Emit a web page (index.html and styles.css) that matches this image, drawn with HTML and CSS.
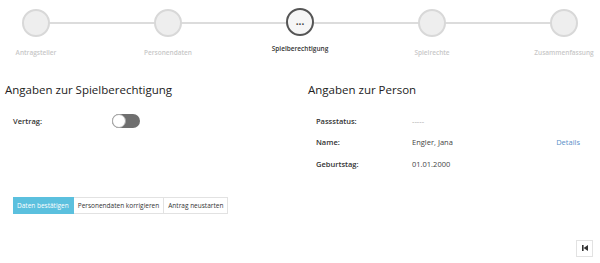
FILE: index.html
```html
<!DOCTYPE html>
<html lang="de">
<head>
    <meta charset="UTF-8"/>
    <title>Antrag</title>
    <link rel="stylesheet" href="styles.css">
</head>
<body>
<div class="steps">
    <div class="step done"><span class="dot"></span><span class="lbl">Antragsteller</span></div>
    <div class="step done"><span class="dot"></span><span class="lbl">Personendaten</span></div>
    <div class="step active"><span class="dot">...</span><span class="lbl">Spielberechtigung</span></div>
    <div class="step"><span class="dot"></span><span class="lbl">Spielrechte</span></div>
    <div class="step last"><span class="dot"></span><span class="lbl">Zusammenfassung</span></div>
</div>

<div class="cols">
    <div class="col">
        <h2 class="ht">Angaben zur Spielberechtigung</h2>
        <div class="row">
            <span class="key">Vertrag:</span>
            <span class="toggle"><span class="knob"></span></span>
        </div>
    </div>
    <div class="col right">
        <h2 class="ht">Angaben zur Person</h2>
        <div class="row">
            <span class="key">Passstatus:</span>
            <span class="val muted">-----</span>
        </div>
        <div class="row">
            <span class="key">Name:</span>
            <span class="val">Engler, Jana</span>
            <a class="link" href="#">Details</a>
        </div>
        <div class="row">
            <span class="key">Geburtstag:</span>
            <span class="val">01.01.2000</span>
        </div>
    </div>
</div>

<div class="btns">
    <button class="btn primary">Daten bestätigen</button>
    <button class="btn">Personendaten korrigieren</button>
    <button class="btn">Antrag neustarten</button>
</div>

<div class="foot">
    <button class="iconbtn">
        <svg width="8" height="8" viewBox="0 0 8 8">
            <rect x="1" y="1" width="1.6" height="6" fill="#333"/>
            <path d="M7 1 L2.6 4 L7 7 Z" fill="#333"/>
        </svg>
    </button>
</div>
</body>
</html>
```

FILE: styles.css
```css
body {
    margin: 0;
    font-family: "Open Sans", "Noto Sans", sans-serif;
    color: #333;
    background: #fff;
    width: 600px;
    height: 263px;
    overflow: hidden;
}

/* stepper */
.steps {
    display: flex;
    padding: 9px 0 0 0;
    margin-left: -30px;
    height: 51px;
}

.step {
    flex: 0 0 132px;
    display: flex;
    flex-direction: column;
    align-items: center;
    position: relative;
}

.step::after {
    content: "";
    position: absolute;
    top: 13px;
    left: 66px;
    width: 132px;
    height: 2px;
    background: #dcdcdc;
}

.step.last::after {
    display: none;
}

.dot {
    width: 24px;
    height: 24px;
    border: 2px solid #d8d8d8;
    border-radius: 50%;
    background: #eeeeee;
    position: relative;
    z-index: 1;
    display: flex;
    align-items: center;
    justify-content: center;
    font-size: 10px;
    font-weight: bold;
    line-height: 1;
    color: #444;
}

.step.active .dot {
    border-color: #555;
    background: #f6f6f6;
    padding-bottom: 3px;
    box-sizing: border-box;
    width: 28px;
    height: 28px;
    margin-top: -1px;
}

.lbl {
    margin-top: 11px;
    font-size: 6.5px;
    font-weight: 600;
    color: #c8c8c8;
    white-space: nowrap;
}

.step.active .lbl {
    color: #333;
    margin-top: 8px;
}

/* columns */
.cols {
    display: grid;
    grid-template-columns: 303px 297px;
    margin-top: 22px;
}

.col {
    padding-left: 5px;
}

.ht {
    font-size: 11.5px;
    font-weight: 400;
    margin: 0 0 13px 0;
    color: #222;
}

.row {
    display: flex;
    align-items: center;
    height: 21.5px;
    padding-left: 8px;
    font-size: 7.5px;
}

.key {
    width: 99px;
    font-weight: 600;
    color: #333;
}

.right .key {
    width: 96px;
}

.val {
    flex: 1;
    color: #444;
}

.muted {
    color: #aaa;
}

.link {
    color: #5a8fc8;
    text-decoration: none;
    margin-right: 20px;
}

.toggle {
    width: 28px;
    height: 14px;
    border-radius: 7px;
    background: #6f6f6f;
    position: relative;
}

.knob {
    position: absolute;
    left: 0;
    top: 0;
    width: 12px;
    height: 12px;
    border: 1px solid #aaa;
    border-radius: 50%;
    background: #fff;
}

/* buttons */
.btns {
    display: flex;
    margin: 22px 0 0 13px;
}

.btn {
    font-family: inherit;
    font-size: 6.5px;
    height: 17px;
    padding: 0 4px;
    border: 1px solid #e2e2e2;
    border-left: 0;
    background: #fff;
    color: #333;
}

.btn.primary {
    background: #5bc0de;
    border-color: #5bc0de;
    color: #fff;
}

.foot {
    display: flex;
    justify-content: flex-end;
    padding: 26px 7px 0 0;
}

.iconbtn {
    width: 17px;
    height: 17px;
    padding: 0;
    border: 1px solid #e2e2e2;
    background: #fff;
    display: flex;
    align-items: center;
    justify-content: center;
}
```
